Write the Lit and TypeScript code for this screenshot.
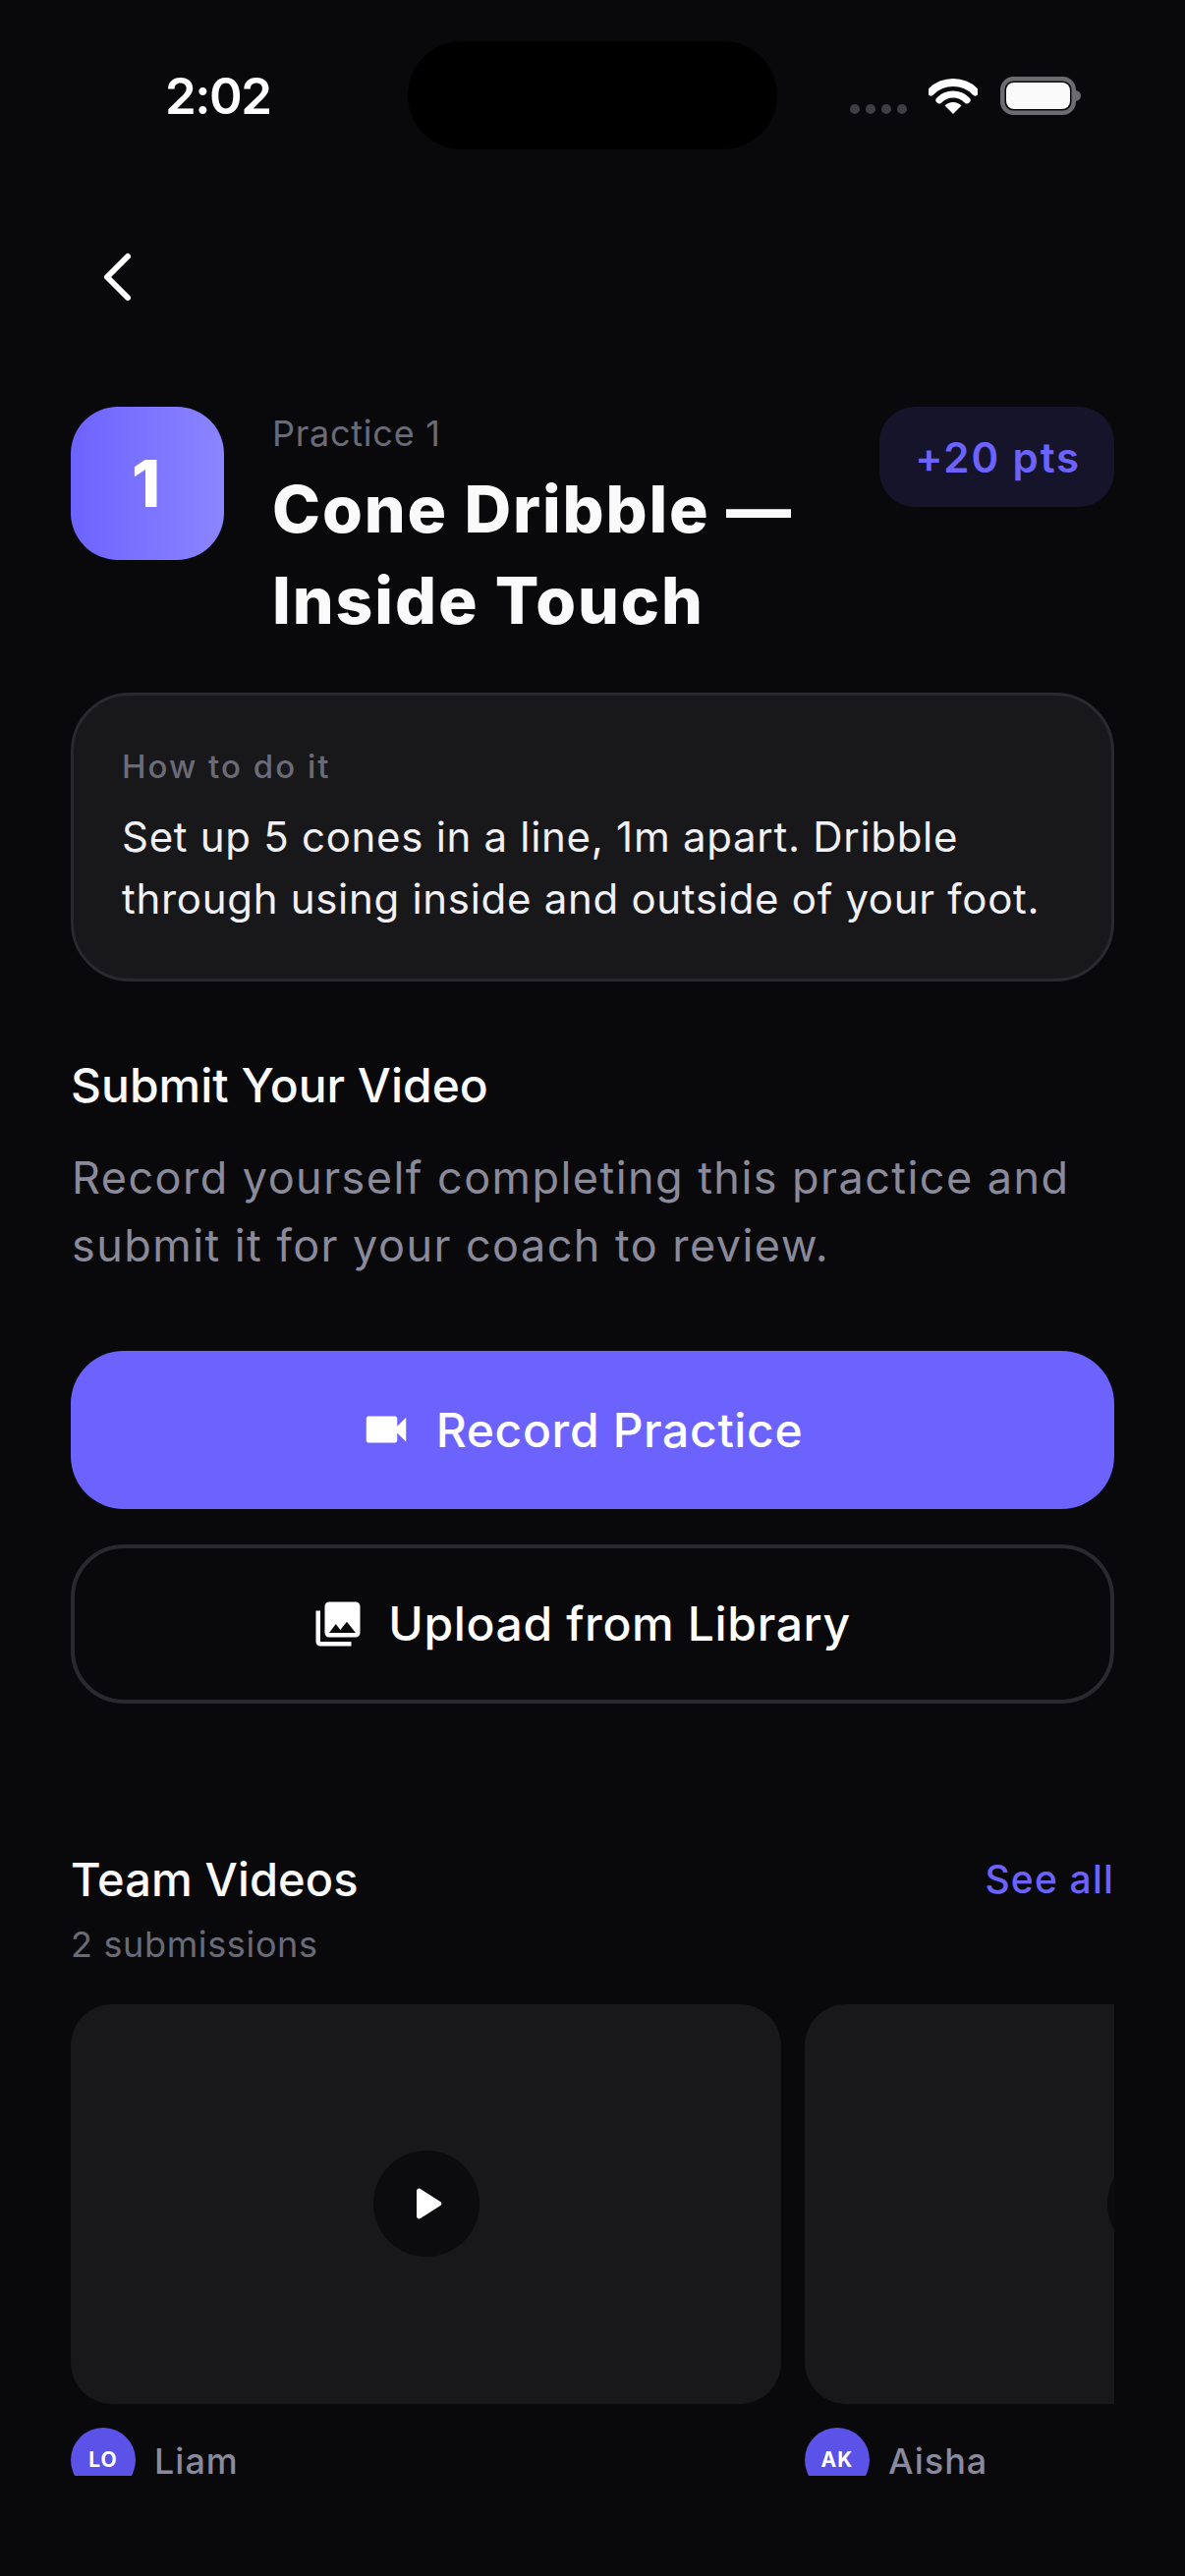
import { LitElement, html, css } from "lit";
import { customElement } from "lit/decorators.js";

const videos = [
  { initials: "LO", name: "Liam" },
  { initials: "AK", name: "Aisha" },
];

@customElement("app-root")
export class AppRoot extends LitElement {
  static styles = css`
    :host {
      display: block;
      width: 1206px;
      height: 2622px;
      background: #09090c;
      color: #fff;
      font-family: Inter, "Noto Sans", sans-serif;
      overflow: hidden;
    }
    * { box-sizing: border-box; }
    svg { display: block; flex: none; }

    .status {
      position: relative;
      height: 168px;
      padding: 0 106px 0 168px;
      display: flex;
      justify-content: space-between;
    }
    .time {
      margin-top: 66px;
      font-size: 51px;
      line-height: 63px;
      font-weight: 600;
      letter-spacing: -1.5px;
    }
    .island {
      position: absolute;
      left: 415px;
      top: 42px;
      width: 376px;
      height: 110px;
      border-radius: 55px;
      background: #000;
    }
    .sys {
      margin-top: 78px;
      display: flex;
      align-items: flex-start;
    }
    .dots { display: flex; gap: 6px; margin: 28px 22px 0 0; }
    .dots i { width: 10px; height: 10px; border-radius: 50%; background: #3e3e44; }
    .wifi { margin: 1px 23px 0 0; }

    .scroll {
      height: 2352px;
      padding: 0 72px;
      overflow: hidden;
    }
    .back { height: 84px; margin: 72px 0 90px; display: flex; align-items: center; padding-left: 31px; }

    .head { display: flex; gap: 49px; align-items: flex-start; }
    .num {
      flex: none;
      width: 156px;
      height: 156px;
      padding-right: 3px;
      border-radius: 48px;
      background: linear-gradient(90deg, #6c63ff, #8b85ff);
      display: flex;
      align-items: center;
      justify-content: center;
      font-size: 66px;
      font-weight: 800;
    }
    .titles { flex: 1; min-width: 0; }
    .eyebrow { font-size: 36px; line-height: 54px; letter-spacing: 0.75px; color: #6b6b78; }
    h1 { margin: 4px 0 0; font-size: 66px; line-height: 93.4px; font-weight: 800; letter-spacing: 1.9px; color: #fafafa; }
    .badge {
      flex: none;
      height: 102px;
      padding: 0 34px 0 36px;
      border-radius: 36px;
      background: #15142a;
      color: #6c63ff;
      font-size: 42px;
      font-weight: 600;
      letter-spacing: 1.9px;
      display: flex;
      align-items: center;
    }

    .how {
      margin-top: 46px;
      height: 294px;
      padding: 53px 46px 0 49px;
      border: 3px solid #2a2a2e;
      border-radius: 60px;
      background: #18181b;
    }
    .how-label { font-size: 33px; line-height: 39px; font-weight: 500; letter-spacing: 2px; color: #6b6b78; }
    .how-text { margin-top: 20px; font-size: 42px; line-height: 63px; letter-spacing: 0.7px; color: #f0f0f5; }

    h2 { margin: 0; font-size: 48px; line-height: 66px; font-weight: 500; color: #fafafa; }
    .submit { margin-top: 73.5px; }
    .desc { margin: 26px 0 0 1px; font-size: 45px; line-height: 69px; letter-spacing: 1.45px; color: #8a8a9a; }

    .btn {
      height: 161px;
      padding-right: 23px;
      border-radius: 54px;
      display: flex;
      align-items: center;
      justify-content: center;
      gap: 24px;
      font-size: 48px;
      font-weight: 500;
      letter-spacing: 0.65px;
    }
    .primary { margin-top: 72.5px; background: #6c63ff; }
    .secondary { margin-top: 36px; height: 162px; border: 4.5px solid #2a2a2e; }

    .team { margin-top: 146px; display: flex; justify-content: space-between; align-items: center; }
    .team h2 { font-size: 47px; letter-spacing: 0.1px; }
    .see { font-size: 39px; font-weight: 500; letter-spacing: 1.2px; color: #6c63ff; }
    .count { margin-top: 6px; font-size: 36px; line-height: 54px; letter-spacing: 0.65px; color: #6b6b78; }

    .rail {
      margin-top: 34px;
      display: flex;
      gap: 24px;
      overflow: hidden;
      height: 481px;
    }
    .video { flex: none; width: 723px; }
    .thumb {
      height: 407px;
      border-radius: 42px;
      background: #18181b;
      display: flex;
      align-items: center;
      justify-content: center;
    }
    .play {
      width: 108px;
      height: 108px;
      border-radius: 50%;
      background: #0c0c0f;
      display: flex;
      align-items: center;
      justify-content: center;
    }
    .who { margin-top: 24px; display: flex; gap: 19px; align-items: center; }
    .avatar {
      flex: none;
      width: 66px;
      height: 66px;
      border-radius: 50%;
      background: #5b52e8;
      display: flex;
      align-items: center;
      justify-content: center;
      font-size: 21px;
      font-weight: 700;
      letter-spacing: 1px;
    }
    .name { padding-top: 2px; font-size: 36px; font-weight: 500; letter-spacing: 1px; color: #8a8a9e; }
  `;

  render() {
    return html`
      <div class="status">
        <div class="time">2:02</div>
        <div class="island"></div>
        <div class="sys">
          <div class="dots"><i></i><i></i><i></i><i></i></div>
          <svg class="wifi" width="50" height="37" viewBox="0 0 50 37" fill="none" stroke="#fff" aria-hidden="true">
            <path d="M2.4 14.4A32 32 0 0 1 47.6 14.4" stroke-width="8" stroke-linecap="round" />
            <path d="M10.9 22.9A20 20 0 0 1 39.1 22.9" stroke-width="7" stroke-linecap="round" />
            <path d="M25 37L16.5 28.5A12 12 0 0 1 33.5 28.5Z" fill="#fff" stroke="none" />
          </svg>
          <svg width="82" height="39" viewBox="0 0 82 39" aria-hidden="true">
            <rect x="2.25" y="2.25" width="72.5" height="34.5" rx="11" fill="none" stroke="#6b6b70" stroke-width="4.5" />
            <rect x="6" y="6" width="65" height="27" rx="8" fill="#fafafa" />
            <path d="M77 14c3 .5 5 2.5 5 5.5s-2 5-5 5.5z" fill="#6b6b70" />
          </svg>
        </div>
      </div>

      <div class="scroll">
        <div class="back">
          <svg width="32" height="52" viewBox="0 0 32 52" fill="none" stroke="#fff" stroke-width="6" stroke-linecap="round" stroke-linejoin="round" aria-hidden="true">
            <path d="M27 5L6 26l21 21" />
          </svg>
        </div>

        <div class="head">
          <div class="num">1</div>
          <div class="titles">
            <div class="eyebrow">Practice 1</div>
            <h1>Cone Dribble — Inside Touch</h1>
          </div>
          <div class="badge">+20 pts</div>
        </div>

        <div class="how">
          <div class="how-label">How to do it</div>
          <div class="how-text">Set up 5 cones in a line, 1m apart. Dribble through using inside and outside of your foot.</div>
        </div>

        <div class="submit">
          <h2>Submit Your Video</h2>
          <div class="desc">Record yourself completing this practice and submit it for your coach to review.</div>
        </div>

        <div class="btn primary">
          <svg width="54" height="54" viewBox="0 0 24 24" fill="#fff" aria-hidden="true">
            <path d="M17 10.5V7c0-.55-.45-1-1-1H4c-.55 0-1 .45-1 1v10c0 .55.45 1 1 1h12c.55 0 1-.45 1-1v-3.5l4 4v-11l-4 4z" />
          </svg>
          Record Practice
        </div>
        <div class="btn secondary">
          <svg width="54" height="54" viewBox="0 0 24 24" fill="#fff" aria-hidden="true">
            <path d="M22 16V4c0-1.1-.9-2-2-2H8c-1.1 0-2 .9-2 2v12c0 1.1.9 2 2 2h12c1.1 0 2-.9 2-2zm-11-4l2.03 2.71L16 11l4 5H8l3-4zM2 6v14c0 1.1.9 2 2 2h14v-2H4V6H2z" />
          </svg>
          Upload from Library
        </div>

        <div class="team">
          <h2>Team Videos</h2>
          <div class="see">See all</div>
        </div>
        <div class="count">2 submissions</div>

        <div class="rail">
          ${videos.map(
            (v) => html`
              <div class="video">
                <div class="thumb">
                  <div class="play">
                    <svg width="60" height="60" viewBox="0 0 24 24" fill="#fff" aria-hidden="true">
                      <path d="M8 6.82v10.36c0 .79.87 1.27 1.54.84l8.14-5.18c.62-.39.62-1.29 0-1.69L9.54 5.98C8.87 5.55 8 6.03 8 6.82z" />
                    </svg>
                  </div>
                </div>
                <div class="who">
                  <div class="avatar">${v.initials}</div>
                  <div class="name">${v.name}</div>
                </div>
              </div>
            `,
          )}
        </div>
      </div>
    `;
  }
}
